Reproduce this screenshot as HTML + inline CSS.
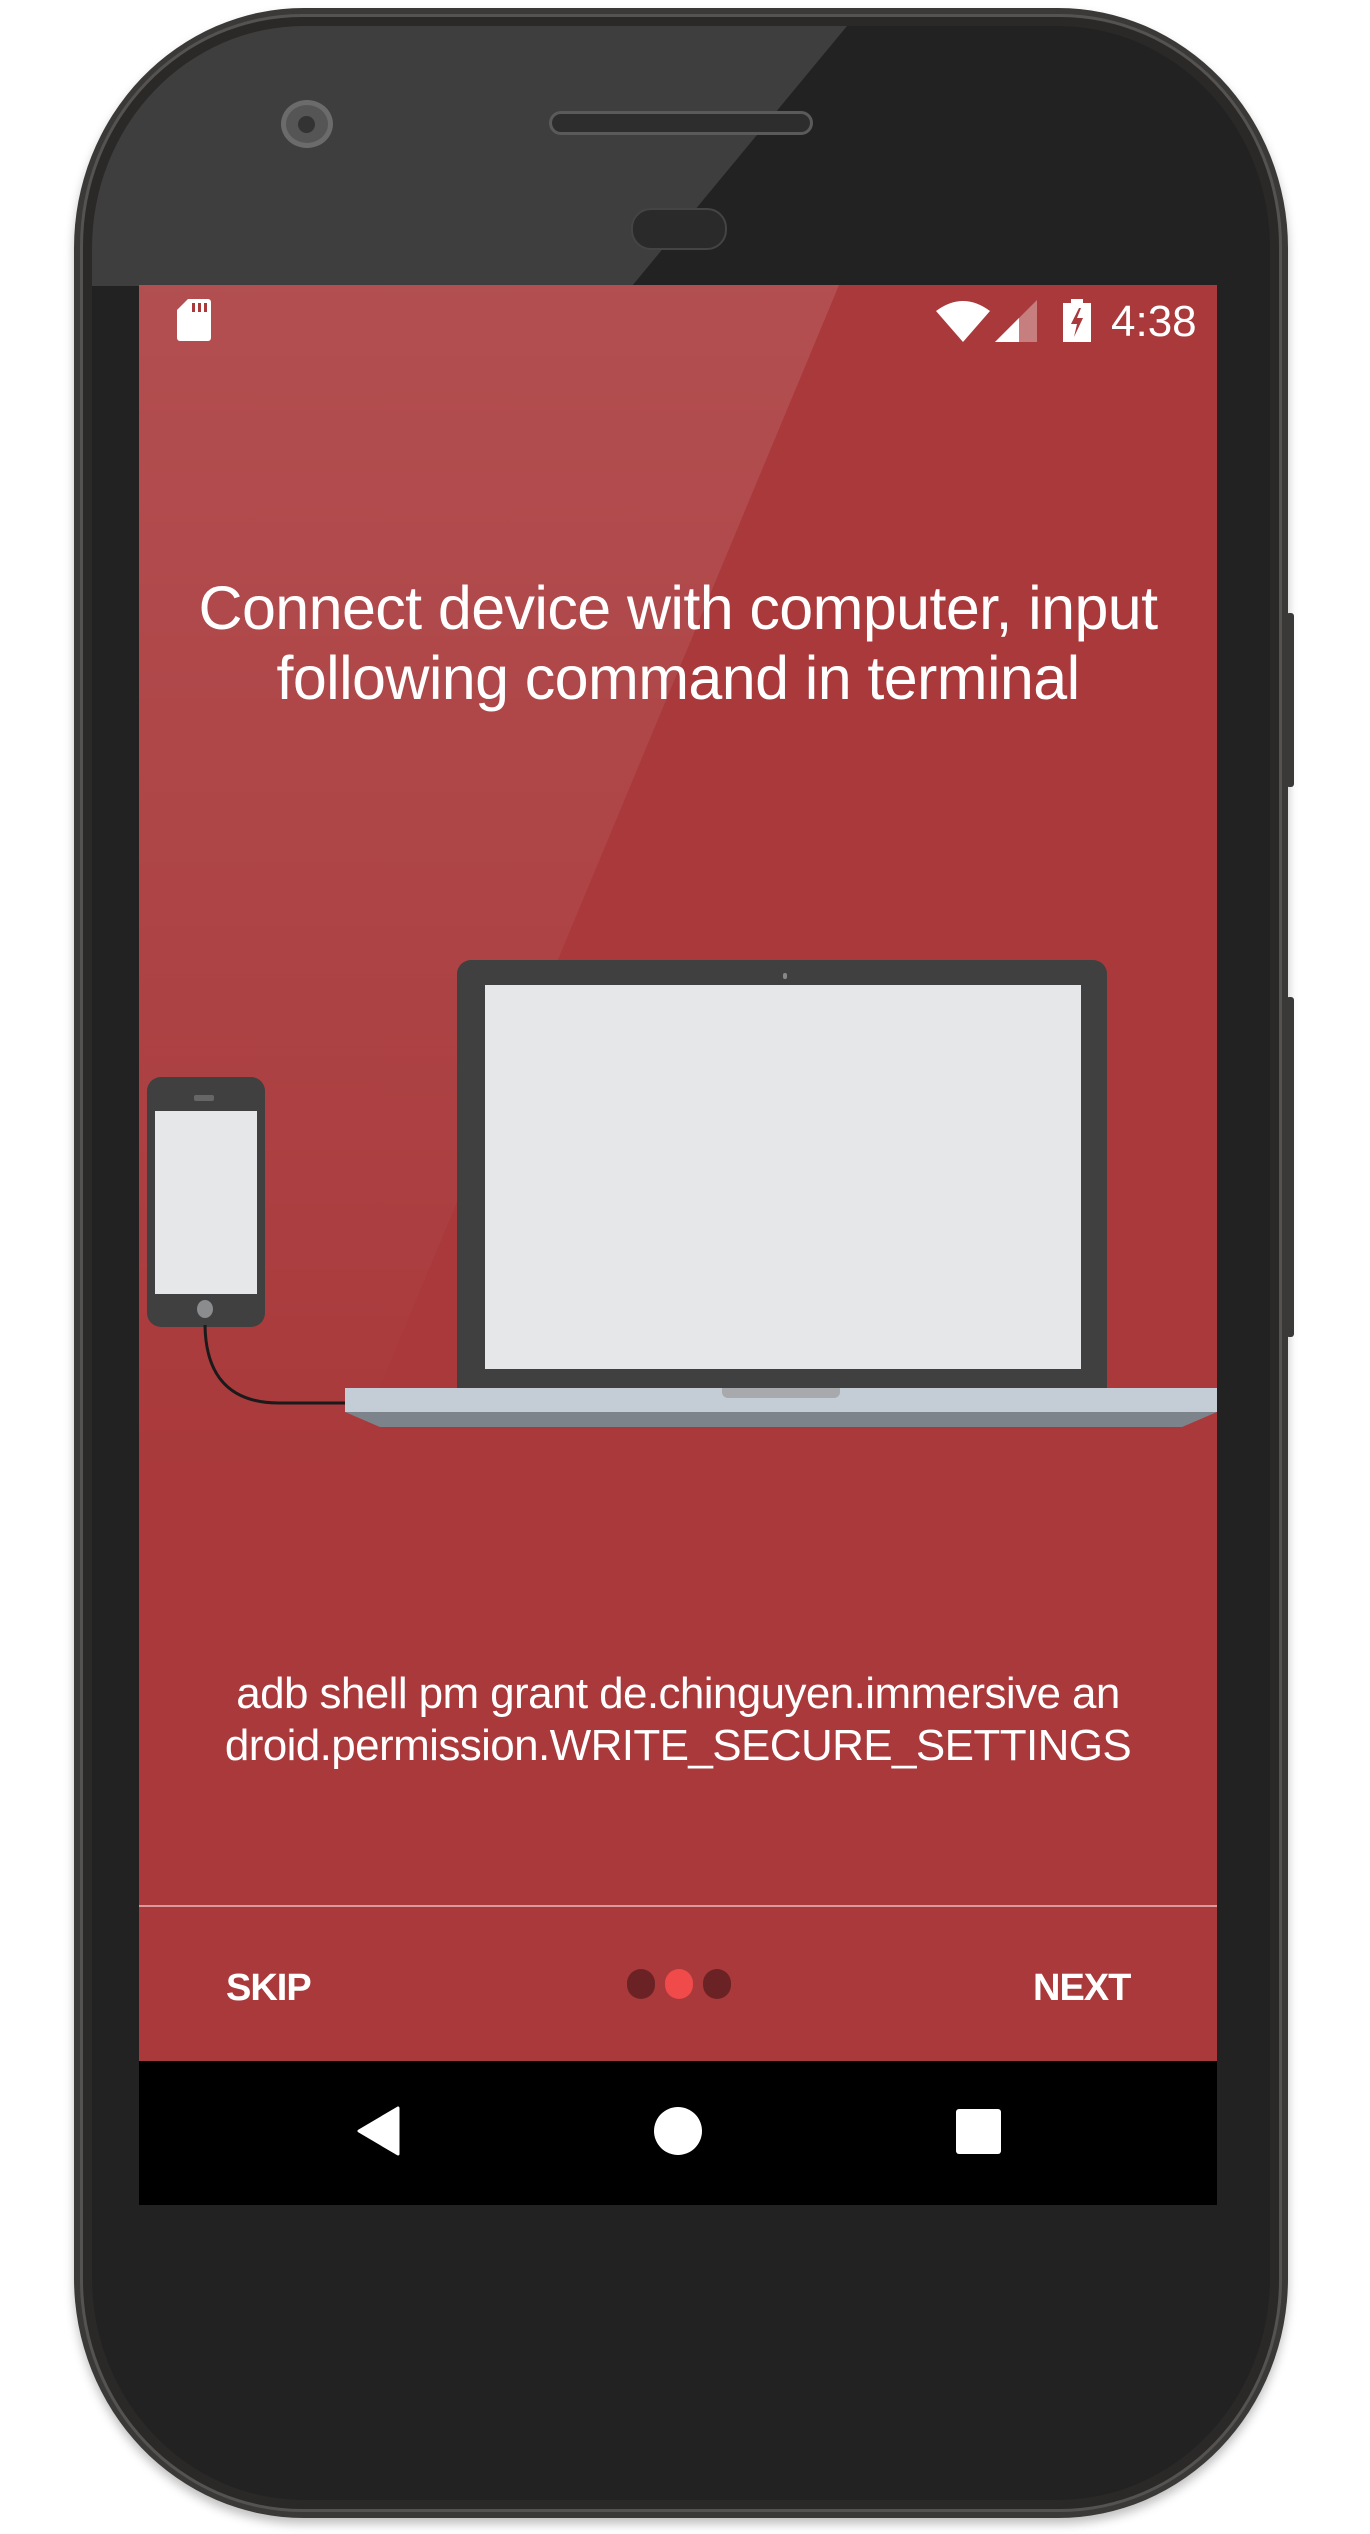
<!DOCTYPE html>
<html><head><meta charset="utf-8"><style>
*{margin:0;padding:0;box-sizing:border-box}
html,body{width:1370px;height:2534px;background:#fff;overflow:hidden;font-family:"Liberation Sans",sans-serif}
.abs{position:absolute}
</style></head><body>
<div class="abs" style="left:74px;top:8px;width:1214px;height:2510px;border-radius:230px/240px;background:#3a3937;box-shadow:0 6px 10px rgba(0,0,0,.25)"></div>
<div class="abs" style="left:80px;top:14px;width:1202px;height:2498px;border-radius:222px/232px;background:#2a2928;border:3px solid #555351"></div>
<div class="abs" style="left:92px;top:26px;width:1178px;height:2474px;border-radius:212px/222px;background:#232222"></div>
<!-- side buttons -->
<div class="abs" style="left:1286px;top:613px;width:8px;height:174px;background:#3a3937;border-radius:3px"></div>
<div class="abs" style="left:1286px;top:997px;width:8px;height:340px;background:#3a3937;border-radius:3px"></div>
<!-- gloss top bezel -->
<div class="abs" style="left:92px;top:26px;width:1178px;height:260px;border-radius:212px 212px 0 0/222px 222px 0 0;background:rgba(255,255,255,.13);clip-path:polygon(0 0,755px 0,540px 260px,0 260px)"></div>
<!-- camera, speaker, sensor -->
<div class="abs" style="left:281px;top:100px;width:52px;height:48px;border-radius:50%;background:#555;border:5px solid #6b6b6b"></div>
<div class="abs" style="left:298px;top:116px;width:17px;height:17px;border-radius:50%;background:#333"></div>
<div class="abs" style="left:549px;top:111px;width:264px;height:24px;border-radius:12px;background:#2d2d2d;border:3px solid #5a5a5a"></div>
<div class="abs" style="left:631px;top:208px;width:96px;height:42px;border-radius:20px;background:#2a2a2a;border:2px solid #444"></div>
<!-- screen -->
<div class="abs" style="left:139px;top:285px;width:1078px;height:1776px;background:#a9393b;overflow:hidden">
 <div class="abs" style="left:0;top:0;width:1078px;height:1200px;background:linear-gradient(180deg,rgba(255,255,255,.11),rgba(255,255,255,.02) 85%,rgba(255,255,255,0));clip-path:polygon(0 0,700px 0,200px 1200px,0 1200px)"></div>
 <!-- status -->
 <svg class="abs" style="left:37px;top:14px" width="36" height="42" viewBox="0 0 36 42"><path d="M12 0H32a3 3 0 0 1 3 3V39a3 3 0 0 1-3 3H4a3 3 0 0 1-3-3V11Z" fill="#fff"/><rect x="16" y="4" width="3" height="9" fill="#a9393b"/><rect x="22" y="4" width="3" height="9" fill="#a9393b"/><rect x="28" y="4" width="3" height="9" fill="#a9393b"/></svg>
 <svg class="abs" style="left:797px;top:14px" width="56" height="44" viewBox="0 0 56 44"><path d="M0 12Q27-8 54 12L27 43Z" fill="#fff"/></svg>
 <svg class="abs" style="left:856px;top:15px" width="43" height="43" viewBox="0 0 43 43"><path d="M0 42L42 0V42Z" fill="#fff" opacity=".35"/><path d="M0 42L24 18V42Z" fill="#fff"/></svg>
 <svg class="abs" style="left:923px;top:14px" width="30" height="44" viewBox="0 0 30 44"><path d="M9 0H21V4H29V43H1V4H9Z" fill="#fff"/><path d="M17 9L9 25H15L12 38L21 19H15L19 9Z" fill="#a9393b"/></svg>
 <div class="abs" style="left:972px;top:12px;color:#fff;font-size:44px;line-height:50px">4:38</div>
 <!-- title -->
 <div class="abs" style="left:-20px;top:288px;width:1118px;text-align:center;color:#fff;font-size:61px;line-height:70px;letter-spacing:-0.6px">Connect device with computer, input<br>following command in terminal</div>
 <!-- laptop -->
 <div class="abs" style="left:318px;top:675px;width:650px;height:430px;background:#404040;border-radius:14px 14px 0 0"></div>
 <div class="abs" style="left:644px;top:688px;width:4px;height:6px;background:#888;border-radius:2px"></div>
 <div class="abs" style="left:346px;top:700px;width:596px;height:384px;background:#e6e7e9"></div>
 <div class="abs" style="left:206px;top:1103px;width:872px;height:24px;background:#c4cdd5"></div>
 <div class="abs" style="left:583px;top:1103px;width:118px;height:10px;background:#a7a9ac;border-radius:0 0 6px 6px"></div>
 <div class="abs" style="left:206px;top:1127px;width:872px;height:15px;background:#7c838b;clip-path:polygon(0 0,100% 0,96% 100%,4% 100%)"></div>
 <!-- phone -->
 <div class="abs" style="left:8px;top:792px;width:118px;height:250px;background:#404040;border-radius:14px"></div>
 <div class="abs" style="left:55px;top:810px;width:20px;height:6px;background:#666;border-radius:2px"></div>
 <div class="abs" style="left:16px;top:826px;width:102px;height:183px;background:#e6e7e9"></div>
 <div class="abs" style="left:58px;top:1015px;width:16px;height:18px;background:#8a8c8e;border-radius:50%"></div>
 <svg class="abs" style="left:0;top:1040px" width="220" height="80"><path d="M66 0C66 40 80 80 140 80H206" fill="none" stroke="#1a1a1a" stroke-width="3" transform="translate(0,-2)"/></svg>
 <!-- command -->
 <div class="abs" style="left:-20px;top:1383px;width:1118px;text-align:center;color:#fff;font-size:44px;line-height:52px;letter-spacing:-0.6px">adb shell pm grant de.chinguyen.immersive an<br>droid.permission.WRITE_SECURE_SETTINGS</div>
 <div class="abs" style="left:0;top:1620px;width:1078px;height:2px;background:#d99a9b"></div>
 <div class="abs" style="left:87px;top:1681px;color:#fff;font-size:38px;line-height:44px;font-weight:bold;letter-spacing:-1px">SKIP</div>
 <div class="abs" style="left:894px;top:1681px;color:#fff;font-size:38px;line-height:44px;font-weight:bold;letter-spacing:-1px">NEXT</div>
 <div class="abs" style="left:488px;top:1684px;width:28px;height:30px;border-radius:14px;background:#6b2224"></div>
 <div class="abs" style="left:526px;top:1684px;width:28px;height:30px;border-radius:14px;background:#f04a4a"></div>
 <div class="abs" style="left:564px;top:1684px;width:28px;height:30px;border-radius:14px;background:#6b2224"></div>
</div>
<div class="abs" style="left:139px;top:2061px;width:1078px;height:144px;background:#000"></div>
<svg class="abs" style="left:356px;top:2106px" width="46" height="50"><path d="M42 2V48L3 25Z" fill="#fff" stroke="#fff" stroke-linejoin="round" stroke-width="3"/></svg>
<div class="abs" style="left:654px;top:2107px;width:48px;height:48px;border-radius:50%;background:#fff"></div>
<div class="abs" style="left:956px;top:2109px;width:45px;height:45px;border-radius:3px;background:#fff"></div>
</body></html>
